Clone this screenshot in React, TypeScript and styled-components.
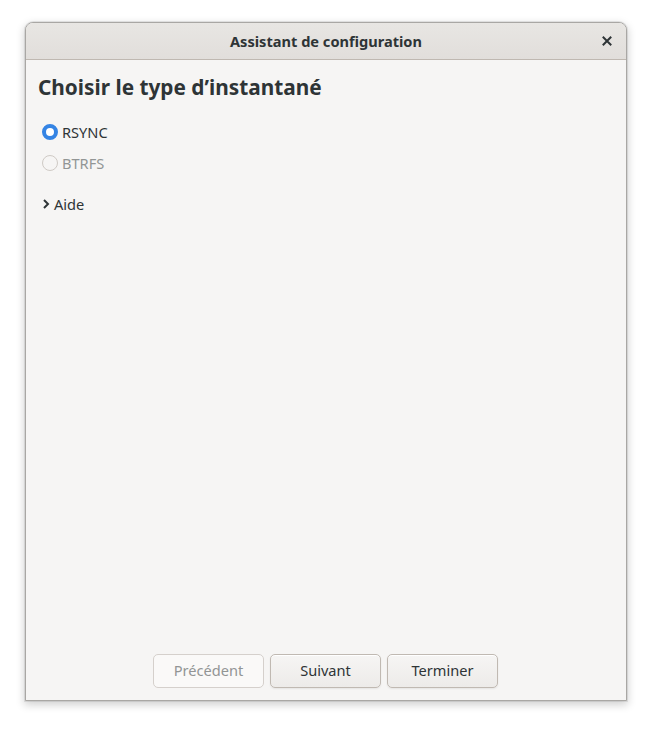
import styled, { createGlobalStyle } from "styled-components";

const Global = createGlobalStyle`
  html, body {
    margin: 0;
    padding: 0;
    background: #ffffff;
    font-family: "Noto Sans", "Open Sans", sans-serif;
  }
`;

const Screen = styled.div`
  width: 652px;
  height: 729px;
  padding: 22px 0 0 25px;
  box-sizing: border-box;
`;

const Window = styled.div`
  width: 602px;
  height: 679px;
  box-sizing: border-box;
  display: flex;
  flex-direction: column;
  background: #f6f5f4;
  border: 1px solid #a9a7a4;
  border-radius: 8px 8px 0 0;
  box-shadow: 0 3px 9px 1px rgba(0, 0, 0, 0.18), 0 0 0 1px rgba(0, 0, 0, 0.08);
  overflow: hidden;
`;

const TitleBar = styled.div`
  height: 36px;
  flex-shrink: 0;
  display: flex;
  align-items: center;
  justify-content: center;
  position: relative;
  background: linear-gradient(#e8e6e3, #e1dedb);
  border-bottom: 1px solid #bfb8b1;
  color: #2e3436;
  font-size: 14.6px;
  font-weight: 700;
`;

const CloseButton = styled.span`
  position: absolute;
  right: 12px;
  top: 11px;
  width: 14px;
  height: 14px;
  display: flex;
  align-items: center;
  justify-content: center;
`;

const Body = styled.div`
  flex: 1;
  display: flex;
  flex-direction: column;
  padding: 13px 12px 12px 12px;
  color: #2e3436;
`;

const Heading = styled.h1`
  margin: 0 0 15px 0;
  font-size: 20.8px;
  font-weight: 700;
  line-height: 28px;
  color: #2e3436;
`;

const RadioRow = styled.label<{ $disabled?: boolean }>`
  display: flex;
  align-items: center;
  gap: 4px;
  height: 31px;
  padding-left: 4px;
  font-size: 14.6px;
  color: ${(p) => (p.$disabled ? "#929595" : "#2e3436")};
`;

const RadioDot = styled.span<{ $checked?: boolean; $disabled?: boolean }>`
  width: 16px;
  height: 16px;
  box-sizing: border-box;
  border-radius: 50%;
  background: ${(p) => (p.$checked ? "#ffffff" : p.$disabled ? "#f6f5f4" : "#ffffff")};
  border: ${(p) =>
    p.$checked ? "4px solid #3584e4" : p.$disabled ? "1px solid #cfcac5" : "1px solid #b6afa8"};
`;

const Expander = styled.div`
  display: flex;
  align-items: center;
  gap: 4px;
  margin-top: 15px;
  padding-left: 4px;
  height: 22px;
  font-size: 14.6px;
  color: #2e3436;
`;

const Spacer = styled.div`
  flex: 1;
`;

const ButtonRow = styled.div`
  display: flex;
  gap: 6px;
  padding-left: 115px;
`;

const Button = styled.button<{ $disabled?: boolean }>`
  width: 111px;
  height: 34px;
  box-sizing: border-box;
  border-radius: 5px;
  font-family: inherit;
  font-size: 14.6px;
  line-height: 20px;
  padding: 0 0 3px;
  color: ${(p) => (p.$disabled ? "#929595" : "#2e3436")};
  border: 1px solid ${(p) => (p.$disabled ? "#d5d0cc" : "#c0b9b2")};
  background: ${(p) =>
    p.$disabled ? "#faf9f8" : "linear-gradient(#f6f5f4, #edebe9)"};
  box-shadow: ${(p) => (p.$disabled ? "none" : "inset 0 1px #ffffff, 0 1px 2px rgba(0,0,0,0.07)")};
`;

export default function App() {
  return (
    <>
      <Global />
      <Screen>
        <Window>
          <TitleBar>
            Assistant de configuration
            <CloseButton>
              <svg width="10" height="10" viewBox="0 0 10 10">
                <path d="M1.5 1.5 L8.5 8.5 M8.5 1.5 L1.5 8.5" stroke="#2e3436" strokeWidth="2" strokeLinecap="square" />
              </svg>
            </CloseButton>
          </TitleBar>
          <Body>
            <Heading>Choisir le type d’instantané</Heading>
            <RadioRow>
              <RadioDot $checked />
              RSYNC
            </RadioRow>
            <RadioRow $disabled>
              <RadioDot $disabled />
              BTRFS
            </RadioRow>
            <Expander>
              <svg width="8" height="12" viewBox="0 0 8 12">
                <path d="M2 2 L6 6 L2 10" fill="none" stroke="#2e3436" strokeWidth="2" />
              </svg>
              Aide
            </Expander>
            <Spacer />
            <ButtonRow>
              <Button $disabled>Précédent</Button>
              <Button>Suivant</Button>
              <Button>Terminer</Button>
            </ButtonRow>
          </Body>
        </Window>
      </Screen>
    </>
  );
}
